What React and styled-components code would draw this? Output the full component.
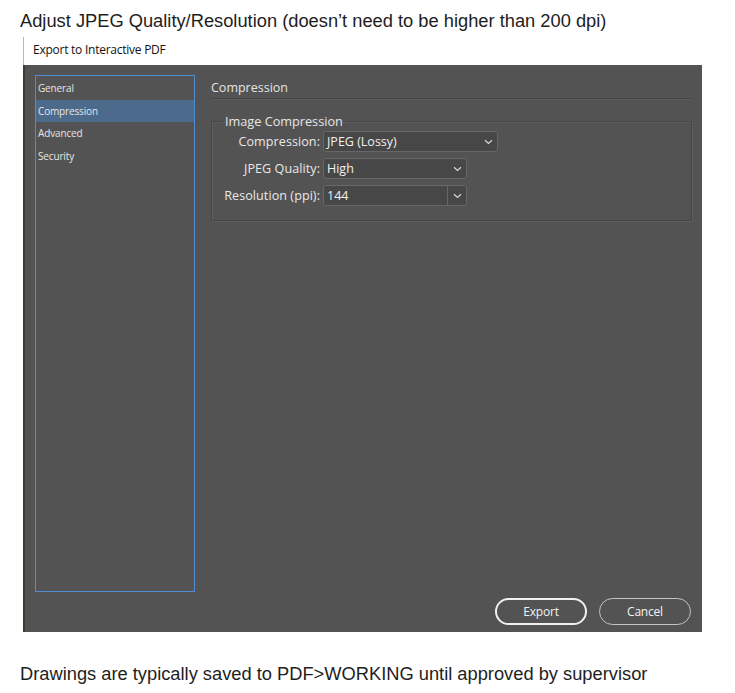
import React from "react";
import styled, { createGlobalStyle } from "styled-components";

const Global = createGlobalStyle`
  html, body { margin: 0; padding: 0; background: #ffffff; }
  body { font-family: "Liberation Sans", Arial, sans-serif; }
`;

const Page = styled.div`
  width: 735px;
  height: 693px;
  overflow: hidden;
  background: #fff;
`;

const Caption = styled.p`
  margin: 0;
  padding-left: 20px;
  font-family: "Liberation Sans", Arial, sans-serif;
  font-size: 18.3px;
  line-height: 22px;
  color: #1e1e1e;
  padding-top: ${(p) => p.$top}px;
  white-space: nowrap;
`;

const Dialog = styled.div`
  margin: 5px 0 0 23px;
  width: 679px;
  font-family: "Open Sans", "Noto Sans", sans-serif;
`;

const TitleBar = styled.div`
  height: 28px;
  border-left: 1px solid #b8b8b8;
  display: flex;
  align-items: center;
  padding: 0 0 3px 9px;
  box-sizing: border-box;
  font-size: 12px;
  letter-spacing: -0.25px;
  color: #111;
  background: #fff;
`;

const Body = styled.div`
  height: 567px;
  box-sizing: border-box;
  background: #535353;
  border-left: 2px solid #3a3d30;
  padding: 10px 10px 7px 10px;
  display: flex;
  flex-direction: column;
`;

const Main = styled.div`
  display: flex;
  gap: 16px;
  height: 517px;
`;

const SideList = styled.ul`
  list-style: none;
  margin: 0;
  padding: 1px 0 0 0;
  width: 160px;
  box-sizing: border-box;
  border: 1px solid #4f8dd0;
  display: flex;
  flex-direction: column;
`;

const SideItem = styled.li`
  height: 22.5px;
  display: flex;
  align-items: center;
  padding-left: 2px;
  font-size: 10px;
  letter-spacing: -0.15px;
  color: #e6e6e6;
  background: ${(p) => (p.$active ? "#4b6a8c" : "transparent")};
`;

const Content = styled.div`
  flex: 1;
  display: flex;
  flex-direction: column;
`;

const SectionTitle = styled.div`
  font-size: 12.5px;
  color: #e4e4e4;
  line-height: 18px;
  height: 19px;
  border-bottom: 1px solid #464646;
  box-shadow: 0 1px 0 #5c5c5c;
  margin-top: 4px;
`;

const Group = styled.fieldset`
  margin: 15px 0 0 0;
  padding: 3px 0 14px 10px;
  border: 1px solid #474747;
  box-shadow: inset 1px 1px 0 #5d5d5d, 1px 1px 0 #5d5d5d;
  display: flex;
  flex-direction: column;
  gap: 6px;
`;

const Legend = styled.legend`
  padding: 0 3px 0 2px;
  margin-left: 1px;
  font-size: 12.7px;
  color: #e6e6e6;
  line-height: 14px;
`;

const Row = styled.div`
  display: flex;
  align-items: center;
  gap: 3px;
`;

const Label = styled.span`
  width: 98px;
  text-align: right;
  font-size: 12.6px;
  letter-spacing: 0.05px;
  color: #e8e8e8;
  white-space: nowrap;
`;

const Select = styled.div`
  width: ${(p) => p.$w}px;
  height: 21px;
  box-sizing: border-box;
  background: #474747;
  border: 1px solid #676767;
  border-radius: 3px;
  display: flex;
  align-items: center;
  font-size: 12.5px;
  color: #f0f0f0;
  padding-left: 3px;
`;

const Value = styled.span`
  flex: 1;
`;

const Arrow = styled.span`
  width: 18px;
  height: 100%;
  display: flex;
  align-items: center;
  justify-content: center;
  border-left: ${(p) => (p.$split ? "1px solid #676767" : "none")};
`;

const Footer = styled.div`
  margin-top: 6px;
  display: flex;
  justify-content: flex-end;
  gap: 12px;
  padding-right: 1px;
`;

const Button = styled.button`
  width: 92px;
  height: 27px;
  box-sizing: border-box;
  border-radius: 14px;
  background: transparent;
  border: ${(p) => (p.$primary ? "2px solid #f0f0f0" : "1.5px solid #c4c4c4")};
  color: #f2f2f2;
  font-family: "Open Sans", "Noto Sans", sans-serif;
  font-size: 12px;
  letter-spacing: -0.2px;
  padding: 0;
`;

const Chevron = () => (
  <svg width="9" height="6" viewBox="0 0 9 6">
    <path d="M1 1.2 L4.5 4.5 L8 1.2" fill="none" stroke="#d8d8d8" strokeWidth="1.2" />
  </svg>
);

export default function App() {
  return (
    <Page>
      <Global />
      <Caption $top={10}>
        Adjust JPEG Quality/Resolution (doesn’t need to be higher than 200 dpi)
      </Caption>
      <Dialog>
        <TitleBar>Export to Interactive PDF</TitleBar>
        <Body>
          <Main>
            <SideList>
              <SideItem>General</SideItem>
              <SideItem $active>Compression</SideItem>
              <SideItem>Advanced</SideItem>
              <SideItem>Security</SideItem>
            </SideList>
            <Content>
              <SectionTitle>Compression</SectionTitle>
              <Group>
                <Legend>Image Compression</Legend>
                <Row>
                  <Label>Compression:</Label>
                  <Select $w={175}>
                    <Value>JPEG (Lossy)</Value>
                    <Arrow><Chevron /></Arrow>
                  </Select>
                </Row>
                <Row>
                  <Label>JPEG Quality:</Label>
                  <Select $w={144}>
                    <Value>High</Value>
                    <Arrow><Chevron /></Arrow>
                  </Select>
                </Row>
                <Row>
                  <Label>Resolution (ppi):</Label>
                  <Select $w={144}>
                    <Value>144</Value>
                    <Arrow $split><Chevron /></Arrow>
                  </Select>
                </Row>
              </Group>
            </Content>
          </Main>
          <Footer>
            <Button $primary>Export</Button>
            <Button>Cancel</Button>
          </Footer>
        </Body>
      </Dialog>
      <Caption $top={31}>
        Drawings are typically saved to PDF&gt;WORKING until approved by supervisor
      </Caption>
    </Page>
  );
}
